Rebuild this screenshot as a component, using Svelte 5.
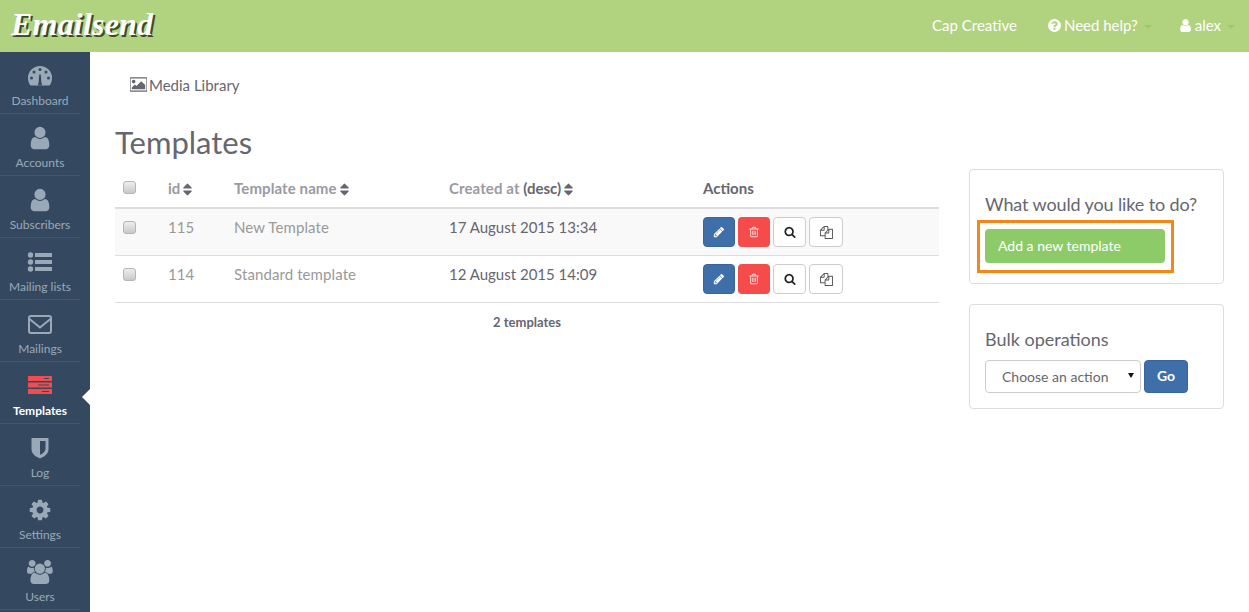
<script>
  const paths = {
    user: 'M1536 1399q0 109-62.5 187t-150.5 78h-854q-88 0-150.5-78t-62.5-187q0-85 8.5-160.5t31.5-152 58.5-131 94-89 134.5-34.5q131 128 313 128t313-128q76 0 134.5 34.5t94 89 58.5 131 31.5 152 8.5 160.5zm-256-887q0 159-112.5 271.5t-271.5 112.5-271.5-112.5-112.5-271.5 112.5-271.5 271.5-112.5 271.5 112.5 112.5 271.5z',
    pencil: 'M491 1536l91-91-235-235-91 91v107h128v128h107zm523-928q0-22-22-22-10 0-17 7l-542 542q-7 7-7 17 0 22 22 22 10 0 17-7l542-542q7-7 7-17zm-54-192l416 416-832 832h-416v-416zm683 96q0 53-37 90l-166 166-416-416 166-165q36-38 90-38 53 0 91 38l235 234q37 39 37 91z',
    trash: 'M704 736v576q0 14-9 23t-23 9h-64q-14 0-23-9t-9-23v-576q0-14 9-23t23-9h64q14 0 23 9t9 23zm256 0v576q0 14-9 23t-23 9h-64q-14 0-23-9t-9-23v-576q0-14 9-23t23-9h64q14 0 23 9t9 23zm256 0v576q0 14-9 23t-23 9h-64q-14 0-23-9t-9-23v-576q0-14 9-23t23-9h64q14 0 23 9t9 23zm128 724v-948h-896v948q0 22 7 40.5t14.5 27 10.5 8.5h832q3 0 10.5-8.5t14.5-27 7-40.5zm-672-1076h448l-48-117q-7-9-17-11h-317q-10 2-17 11zm928 32v64q0 14-9 23t-23 9h-96v948q0 83-47 143.5t-113 60.5h-832q-66 0-113-58.5t-47-141.5v-952h-96q-14 0-23-9t-9-23v-64q0-14 9-23t23-9h309l70-167q15-37 54-63t79-26h320q40 0 79 26t54 63l70 167h309q14 0 23 9t9 23z',
    search: 'M1216 832q0-185-131.5-316.5t-316.5-131.5-316.5 131.5-131.5 316.5 131.5 316.5 316.5 131.5 316.5-131.5 131.5-316.5zm512 832q0 52-38 90t-90 38q-54 0-90-38l-343-342q-179 124-399 124-143 0-273.5-55.5t-225-150-150-225-55.5-273.5 55.5-273.5 150-225 225-150 273.5-55.5 273.5 55.5 225 150 150 225 55.5 273.5q0 220-124 399l343 343q37 37 37 90z',
    files: 'M1696 384q40 0 68 28t28 68v1216q0 40-28 68t-68 28h-960q-40 0-68-28t-28-68v-288h-544q-40 0-68-28t-28-68v-672q0-40 20-88t48-76l408-408q28-28 76-48t88-20h416q40 0 68 28t28 68v328q68-40 128-40h416zm-544 213l-299 299h299v-299zm-640-384l-299 299h299v-299zm196 647l316-316v-416h-384v416q0 40-28 68t-68 28h-416v640h512v-256q0-40 20-88t48-76zm956 804v-1152h-384v416q0 40-28 68t-68 28h-416v640h896z',
    help: 'M1024 1376v-192q0-14-9-23t-23-9h-192q-14 0-23 9t-9 23v192q0 14 9 23t23 9h192q14 0 23-9t9-23zm256-672q0-88-55.5-163t-138.5-116-170-41q-243 0-371 213-15 24 8 42l132 100q7 6 19 6 16 0 25-12 53-68 86-92 34-24 86-24 48 0 85.5 26t37.5 59q0 38-20 61t-68 45q-63 28-115.5 86.5t-52.5 125.5v36q0 14 9 23t23 9h192q14 0 23-9t9-23q0-19 21.5-49.5t54.5-49.5q32-18 49-28.5t46-35 44.5-48 28-60.5 12.5-81zm384 192q0 209-103 385.5t-279.5 279.5-385.5 103-385.5-103-279.5-279.5-103-385.5 103-385.5 279.5-279.5 385.5-103 385.5 103 279.5 279.5 103 385.5z',
    cog: 'M1152 896q0-106-75-181t-181-75-181 75-75 181 75 181 181 75 181-75 75-181zm512-109v222q0 12-8 23t-20 13l-185 28q-19 54-39 91 35 50 107 138 10 12 10 25t-9 23q-27 37-99 108t-94 71q-12 0-26-9l-138-108q-44 23-91 38-16 136-29 186-7 28-36 28h-222q-14 0-24.5-8.5t-11.5-21.5l-28-184q-49-16-90-37l-141 107q-10 9-25 9-14 0-25-11-126-114-165-168-7-10-7-23 0-12 8-23 15-21 51-66.5t54-70.5q-27-50-41-99l-183-27q-13-2-21-12.5t-8-23.5v-222q0-12 8-23t19-13l186-28q14-46 39-92-40-57-107-138-10-12-10-24 0-10 9-23 26-36 98.5-107.5t94.5-71.5q13 0 26 10l138 107q44-23 91-38 16-136 29-186 7-28 36-28h222q14 0 24.5 8.5t11.5 21.5l28 184q49 16 90 37l142-107q9-9 24-9 13 0 25 10 129 119 165 170 7 8 7 22 0 12-8 23-15 21-51 66.5t-54 70.5q26 50 41 98l183 28q13 2 21 12.5t8 23.5z',
    users: 'M593 896q-162 5-265 128h-134q-82 0-138-40.5t-56-118.5q0-353 124-353 6 0 43.5 21t97.5 42.5 119 21.5q67 0 133-23-5 37-5 66 0 139 81 256zm1071 637q0 120-73 189.5t-194 69.5h-874q-121 0-194-69.5t-73-189.5q0-53 3.5-103.5t14-109 26.5-108.5 43-97.5 62-81 85.5-53.5 111.5-20q10 0 43 21.5t73 48 107 48 135 21.5 135-21.5 107-48 73-48 43-21.5q61 0 111.5 20t85.5 53.5 62 81 43 97.5 26.5 108.5 14 109 3.5 103.5zm-1024-1277q0 106-75 181t-181 75-181-75-75-181 75-181 181-75 181 75 75 181zm704 384q0 159-112.5 271.5t-271.5 112.5-271.5-112.5-112.5-271.5 112.5-271.5 271.5-112.5 271.5 112.5 112.5 271.5zm576 225q0 78-56 118.5t-138 40.5h-134q-103-123-265-128 81-117 81-256 0-29-5-66 66 23 133 23 59 0 119-21.5t97.5-42.5 43.5-21q124 0 124 353zm-128-609q0 106-75 181t-181 75-181-75-75-181 75-181 181-75 181 75 75 181z',
    picture: 'M576 576q0 80-56 136t-136 56-136-56-56-136 56-136 136-56 136 56 56 136zm1024 384v448h-1408v-192l320-320 160 160 512-512zm96-704h-1600q-13 0-22.5 9.5t-9.5 22.5v1216q0 13 9.5 22.5t22.5 9.5h1600q13 0 22.5-9.5t9.5-22.5v-1216q0-13-9.5-22.5t-22.5-9.5zm160 32v1216q0 66-47 113t-113 47h-1600q-66 0-113-47t-47-113v-1216q0-66 47-113t113-47h1600q66 0 113 47t47 113z',
    sort: 'M1408 1088q0 26-19 45l-448 448q-19 19-45 19t-45-19l-448-448q-19-19-19-45t19-45 45-19h896q26 0 45 19t19 45zm0-384q0 26-19 45t-45 19h-896q-26 0-45-19t-19-45 19-45l448-448q19-19 45-19t45 19l448 448q19 19 19 45z'
  };

  const nav = [
    { label: 'Dashboard', icon: 'gauge' },
    { label: 'Accounts', icon: 'user' },
    { label: 'Subscribers', icon: 'user' },
    { label: 'Mailing lists', icon: 'list' },
    { label: 'Mailings', icon: 'mail' },
    { label: 'Templates', icon: 'templates', active: true },
    { label: 'Log', icon: 'shield' },
    { label: 'Settings', icon: 'cog' },
    { label: 'Users', icon: 'users' }
  ];

  const templates = [
    { id: 115, name: 'New Template', created: '17 August 2015 13:34' },
    { id: 114, name: 'Standard template', created: '12 August 2015 14:09' }
  ];
</script>

{#snippet fa(name, size, wide = 1792)}
  <svg class="fa" width={size * wide / 1792} height={size} viewBox="0 0 {wide} 1792" fill="currentColor"><path d={paths[name]} /></svg>
{/snippet}

<div class="page">
  <header class="topbar">
    <div class="logo">Emailsend</div>
    <nav class="topnav">
      <span class="account">Cap Creative</span>
      <span class="menu help">{@render fa('help', 15)}Need help?<i class="caret"></i></span>
      <span class="menu">{@render fa('user', 15)}alex<i class="caret"></i></span>
    </nav>
  </header>

  <div class="body">
    <aside class="sidebar">
      {#each nav as item}
        <div class="item" class:active={item.active}>
          <div class="icon">
            {#if item.icon === 'gauge'}
              <svg width="26" height="24" viewBox="0 0 26 24">
                <path fill="currentColor" d="M13 2a12 12 0 0 0-12 12c0 3 1 5.500 2.500 7.500h19c1.500-2 2.500-4.500 2.500-7.500a12 12 0 0 0-12-12z" />
                <g fill="#34495f">
                  <circle cx="13" cy="5.500" r="1.500" /><circle cx="7" cy="8" r="1.500" /><circle cx="19" cy="8" r="1.500" />
                  <circle cx="4.500" cy="14" r="1.500" /><circle cx="21.500" cy="14" r="1.500" />
                  <path d="M12.200 10.500h1.600l.6 8.500a1.500 1.500 0 0 1-.3 2.500h-2.200a1.500 1.500 0 0 1-.3-2.500z" />
                </g>
              </svg>
            {:else if item.icon === 'list'}
              <svg width="26" height="22" viewBox="0 0 26 22" fill="currentColor">
                <circle cx="3.500" cy="4" r="2.700" /><circle cx="3.500" cy="11" r="2.700" /><circle cx="3.500" cy="18" r="2.700" />
                <rect x="8" y="2" width="17" height="4" /><rect x="8" y="9" width="17" height="4" /><rect x="8" y="16" width="17" height="4" />
              </svg>
            {:else if item.icon === 'mail'}
              <svg width="26" height="22" viewBox="0 0 26 22" fill="none" stroke="currentColor" stroke-width="2">
                <rect x="2" y="3" width="22" height="17" rx="2" /><path d="M2.500 6l10.500 8.500L23.500 6" />
              </svg>
            {:else if item.icon === 'templates'}
              <svg class="nudge" width="26" height="20" viewBox="0 0 26 20">
                <g fill="#f04e4e"><rect x="1" y="1" width="24" height="5" /><rect x="1" y="7.500" width="24" height="5" /><rect x="1" y="14" width="24" height="5" /></g>
                <g fill="#34495f"><rect x="17" y="3" width="5" height="1" /><rect x="11" y="9.500" width="11" height="1" /><rect x="15" y="16" width="7" height="1" /></g>
              </svg>
            {:else if item.icon === 'shield'}
              <svg width="20" height="24" viewBox="0 0 20 24">
                <path fill="currentColor" d="M1.500 2h17v11c0 5-4.500 8-8.500 9.500C6 21 1.500 18 1.500 13z" />
                <path fill="#34495f" d="M10 5h5.500v8c0 2.500-2.500 4.500-5.500 5.800z" />
              </svg>
            {:else if item.icon === 'users'}
              {@render fa('users', 24, 1920)}
            {:else if item.icon === 'cog'}
              {@render fa('cog', 24)}
            {:else}
              {@render fa(item.icon, 26)}
            {/if}
          </div>
          <span>{item.label}</span>
        </div>
      {/each}
    </aside>

    <main class="content">
      <div class="main-col">
        <a class="media">{@render fa('picture', 17)}Media Library</a>
        <h1>Templates</h1>
        <table>
          <colgroup><col class="c1" /><col class="c2" /><col class="c3" /><col class="c4" /><col class="c5" /></colgroup>
          <thead>
            <tr>
              <th><input type="checkbox" /></th>
              <th><span class="sortable">id</span>{@render fa('sort', 15)}</th>
              <th><span class="sortable wide">Template name</span>{@render fa('sort', 15)}</th>
              <th><span class="sortable wide">Created at</span> (desc){@render fa('sort', 15)}</th>
              <th>Actions</th>
            </tr>
          </thead>
          <tbody>
            {#each templates as t}
              <tr>
                <td><input type="checkbox" /></td>
                <td class="muted">{t.id}</td>
                <td class="muted name">{t.name}</td>
                <td>{t.created}</td>
                <td>
                  <div class="actions">
                    <button class="btn blue">{@render fa('pencil', 12)}</button>
                    <button class="btn red">{@render fa('trash', 12)}</button>
                    <button class="btn plain search">{@render fa('search', 12)}</button>
                    <button class="btn plain copy">{@render fa('files', 13)}</button>
                  </div>
                </td>
              </tr>
            {/each}
          </tbody>
        </table>
        <p class="count">2 templates</p>
      </div>

      <div class="side-col">
        <section class="panel first">
          <h3 class="ask">What would you like to do?</h3>
          <div class="highlight-wrap">
            <button class="add">Add a new template</button>
            <span class="highlight"></span>
          </div>
        </section>
        <section class="panel">
          <h3>Bulk operations</h3>
          <div class="bulk">
            <div class="select-wrap">
              <select><option>Choose an action</option></select>
            </div>
            <button class="go">Go</button>
          </div>
        </section>
      </div>
    </main>
  </div>
</div>

<style>
  :global(body) {
    margin: 0;
    background: #fff;
    font-family: Lato, "Liberation Sans", sans-serif;
    color: #666670;
  }

  .page {
    height: 612px;
    overflow: hidden;
  }

  .fa {
    display: inline-block;
    flex: none;
  }

  .topbar {
    height: 52px;
    background: #b1d27f;
    display: flex;
    align-items: center;
    justify-content: space-between;
    padding: 0 14px 0 11px;
    color: #fff;
    font-size: 15px;
  }

  .logo {
    font-family: "Liberation Serif", serif;
    font-style: italic;
    font-weight: bold;
    font-size: 32px;
    letter-spacing: 0.2px;
    margin-top: -3px;
    text-shadow: 2px 2px 0 #3c4a2c;
  }

  .topnav {
    display: flex;
    align-items: center;
    margin-top: -2px;
  }

  .account {
    margin-right: 30px;
  }

  .menu {
    display: flex;
    align-items: center;
    gap: 2px;
  }

  .help {
    margin-right: 26px;
  }

  .caret {
    width: 0;
    height: 0;
    margin-left: 4px;
    margin-top: 3px;
    border: 4px solid transparent;
    border-top-color: #a0c56f;
    border-bottom: 0;
  }

  .body {
    display: flex;
    height: 560px;
  }

  .sidebar {
    width: 90px;
    flex: none;
    background: #34495f;
  }

  .item {
    position: relative;
    width: 80px;
    height: 62px;
    box-sizing: border-box;
    border-bottom: 1px solid #43586d;
    color: #9aa9b8;
    font-size: 12px;
    text-align: center;
    padding-top: 9px;
    line-height: 17px;
  }

  .icon {
    height: 30px;
    margin-bottom: 1px;
    display: flex;
    align-items: center;
    justify-content: center;
  }

  .nudge {
    margin-top: -3px;
  }

  .item.active {
    color: #fff;
    font-weight: bold;
  }

  .item.active::after {
    content: '';
    position: absolute;
    right: -10px;
    top: 27px;
    border: 8px solid transparent;
    border-right-color: #fff;
    border-left: 0;
  }

  .content {
    flex: 1;
    display: flex;
    gap: 30px;
    padding: 0 25px;
    min-width: 0;
  }

  .main-col {
    flex: 1;
    min-width: 0;
  }

  .media {
    display: flex;
    align-items: center;
    gap: 2px;
    padding: 22px 15px 0;
    height: 21px;
    font-size: 15px;
  }

  h1 {
    margin: 27px 0 0;
    font-size: 31px;
    font-weight: 400;
    line-height: 40px;
  }

  table {
    width: 824px;
    table-layout: fixed;
    border-collapse: collapse;
    margin-top: 8px;
    font-size: 15px;
  }

  .c1 { width: 45px; }
  .c2 { width: 66px; }
  .c3 { width: 215px; }
  .c4 { width: 254px; }
  .c5 { width: 244px; }

  th {
    text-align: left;
    height: 38px;
    padding: 0 8px 2px;
    box-sizing: border-box;
    font-size: 15px;
    font-weight: bold;
    border-bottom: 2px solid #ddd;
  }

  th .fa {
    vertical-align: -3px;
  }

  .sortable {
    color: #9a9aa2;
  }

  .wide {
    letter-spacing: 0.1px;
  }

  td {
    height: 47px;
    padding: 0 8px 10px;
    box-sizing: border-box;
    border-bottom: 1px solid #ddd;
  }

  tbody tr:first-child {
    background: #f9f9f9;
  }

  .muted {
    color: #999;
  }

  .name {
    letter-spacing: 0.1px;
  }

  input[type='checkbox'] {
    appearance: none;
    display: block;
    width: 13px;
    height: 13px;
    margin: 0;
    border: 1px solid #b5b5b5;
    border-radius: 3px;
    background: linear-gradient(#eee, #c9c9c9);
  }

  .actions {
    display: flex;
    gap: 3px;
    margin: 8px 0 -2px;
  }

  .btn {
    width: 32px;
    height: 30px;
    padding: 0;
    border: 1px solid transparent;
    border-radius: 4px;
    display: flex;
    align-items: center;
    justify-content: center;
  }

  .blue {
    background: #3f6fa8;
    color: #fff;
    border-color: #38659b;
  }

  .red {
    background: #f64b4b;
    color: #fbdcdc;
  }

  .plain {
    background: #fff;
    color: #222;
    border-color: #ccc;
  }

  .search {
    width: 33px;
  }

  .copy {
    width: 34px;
    color: #555;
  }

  .count {
    margin: 11px 0 0;
    text-align: center;
    font-size: 13px;
    font-weight: bold;
    line-height: 16px;
  }

  .side-col {
    width: 255px;
    flex: none;
    padding-top: 117px;
  }

  .panel {
    box-sizing: border-box;
    border: 1px solid #ddd;
    border-radius: 4px;
    padding: 23px 15px 15px;
    height: 105px;
  }

  .panel.first {
    height: 115px;
    margin-bottom: 20px;
  }

  h3 {
    margin: 0 0 10px;
    font-size: 18px;
    font-weight: 400;
    line-height: 22px;
  }

  .ask {
    margin-bottom: 14px;
    letter-spacing: -0.12px;
  }

  .highlight-wrap {
    position: relative;
    width: 180px;
  }

  .add {
    display: block;
    width: 180px;
    height: 34px;
    box-sizing: border-box;
    padding: 0 13px 2px;
    text-align: left;
    border: 0;
    border-radius: 4px;
    background: #8ccb68;
    color: #fff;
    font: 14px Lato, sans-serif;
  }

  .highlight {
    position: absolute;
    inset: -9px -9px -10px -8px;
    border: 3px solid #f5871a;
    pointer-events: none;
  }

  .bulk {
    display: flex;
    gap: 3px;
  }

  .select-wrap {
    position: relative;
    height: 33px;
  }

  /* arrow is drawn over the select since the native one differs */
  .select-wrap::after {
    content: '';
    position: absolute;
    left: 143px;
    top: 13px;
    border: 3px solid transparent;
    border-top: 5px solid #111;
    border-bottom: 0;
    pointer-events: none;
  }

  select {
    appearance: none;
    display: block;
    width: 156px;
    height: 33px;
    box-sizing: border-box;
    padding: 0 16px;
    border: 1px solid #ccc;
    border-radius: 4px;
    background: #fff;
    color: #666670;
    font: 14px Lato, sans-serif;
  }

  .go {
    width: 44px;
    height: 33px;
    padding: 0 0 2px;
    border: 1px solid #38659b;
    border-radius: 4px;
    background: #3f6fa8;
    color: #fff;
    font: bold 14px Lato, sans-serif;
  }
</style>
